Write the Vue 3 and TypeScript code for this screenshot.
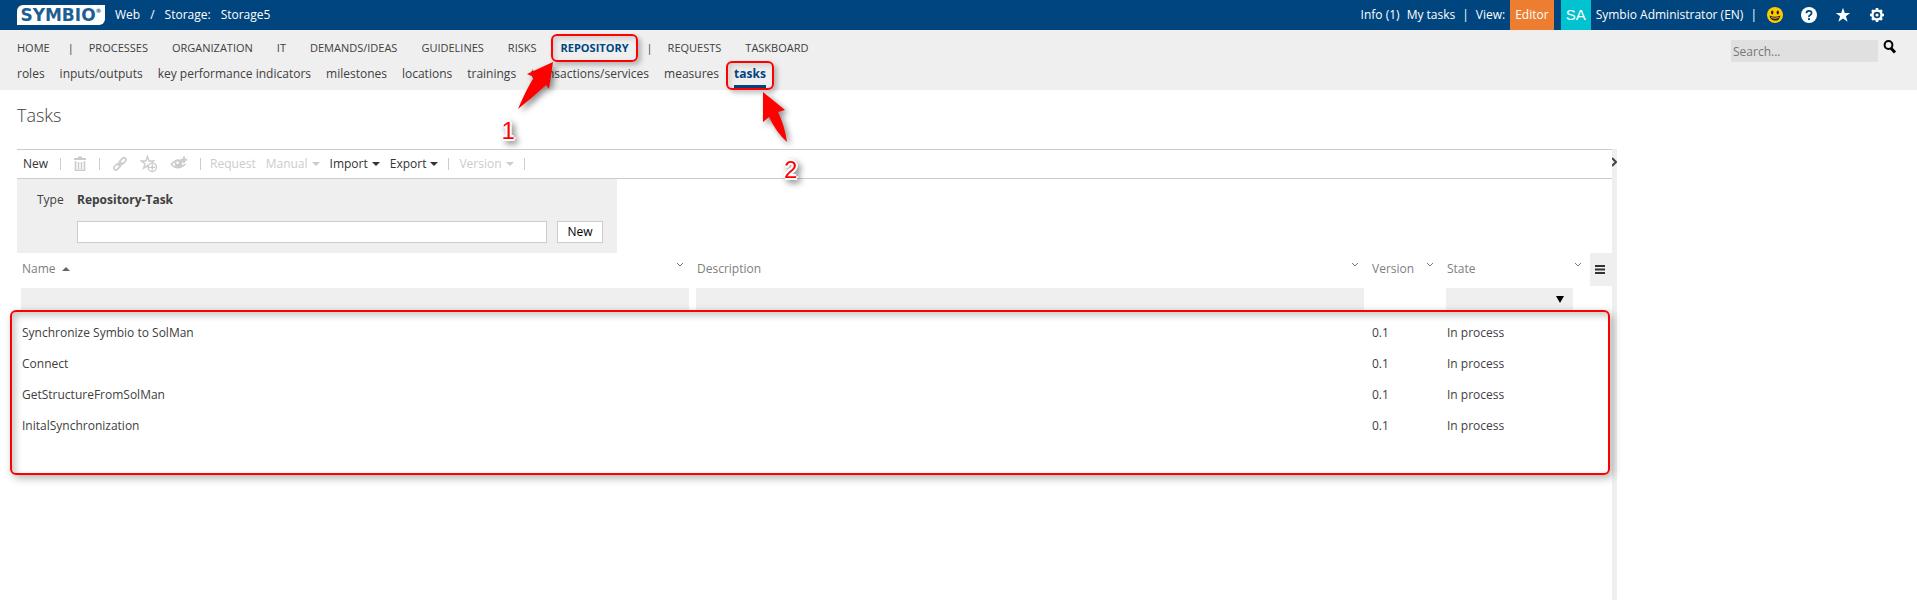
<script setup lang="ts">
import { ref } from 'vue'

interface Tab { label: string; active?: boolean; divider?: boolean }
interface Task { name: string; description: string; version: string; state: string }

const mainTabs: Tab[] = [
  { label: 'HOME' },
  { label: '|', divider: true },
  { label: 'PROCESSES' },
  { label: 'ORGANIZATION' },
  { label: 'IT' },
  { label: 'DEMANDS/IDEAS' },
  { label: 'GUIDELINES' },
  { label: 'RISKS' },
  { label: 'REPOSITORY', active: true },
  { label: '|', divider: true },
  { label: 'REQUESTS' },
  { label: 'TASKBOARD' },
]

const subTabs: Tab[] = [
  { label: 'roles' },
  { label: 'inputs/outputs' },
  { label: 'key performance indicators' },
  { label: 'milestones' },
  { label: 'locations' },
  { label: 'trainings' },
  { label: 'transactions/services' },
  { label: 'measures' },
  { label: 'tasks', active: true },
]

const tasks: Task[] = [
  { name: 'Synchronize Symbio to SolMan', description: '', version: '0.1', state: 'In process' },
  { name: 'Connect', description: '', version: '0.1', state: 'In process' },
  { name: 'GetStructureFromSolMan', description: '', version: '0.1', state: 'In process' },
  { name: 'InitalSynchronization', description: '', version: '0.1', state: 'In process' },
]

const search = ref('')
const newName = ref('')
const nameFilter = ref('')
const descriptionFilter = ref('')
const stateFilter = ref('')
</script>

<template>
  <div class="page">
    <header class="topbar">
      <a href="#" class="logo">SYMBIO<sup>®</sup></a>
      <nav class="crumbs" aria-label="Breadcrumb">
        <a href="#">Web</a><span>/</span><a href="#">Storage:</a><a href="#">Storage5</a>
      </nav>
      <div class="account">
        <a href="#">Info (1)</a>
        <a href="#">My tasks</a>
        <span>|</span>
        <span class="view">View: <button type="button" class="editor">Editor</button></span>
        <a href="#" class="user"><span class="avatar">SA</span>Symbio Administrator (EN)</a>
        <span>|</span>
      </div>
      <div class="top-icons">
        <button type="button" aria-label="Feedback">
          <svg width="16" height="16" viewBox="0 0 16 16"><circle cx="8" cy="8" r="8" fill="#fc0" /><ellipse cx="5.2" cy="5.5" rx="1.2" ry="1.9" fill="#222" /><ellipse cx="10.8" cy="5.5" rx="1.2" ry="1.9" fill="#222" /><path d="M2.5 8.6Q8 11 13.5 8.6Q12.6 13.6 8 13.6T2.5 8.6Z" fill="#222" /><path d="M4 10Q8 11.6 12 10L11.5 11Q8 12.3 4.5 11Z" fill="#fc0" /></svg>
        </button>
        <button type="button" aria-label="Help">
          <svg width="16" height="16" viewBox="0 0 16 16"><circle cx="8" cy="8" r="8" fill="#fff" /><path d="M5.4 6.2Q5.5 3.8 8 3.8T10.6 6Q10.6 7.2 9.2 8T8 10" fill="none" stroke="#00457e" stroke-width="1.8" /><circle cx="8" cy="12.2" r="1.1" fill="#00457e" /></svg>
        </button>
        <button type="button" aria-label="Favorites">
          <svg width="16" height="16" viewBox="0 0 16 16"><path d="M8 .8L9.8 6H15.2L10.9 9.2L12.6 14.8L8 11.4L3.4 14.8L5.1 9.2L.8 6H6.2Z" fill="#fff" /></svg>
        </button>
        <button type="button" aria-label="Settings">
          <svg width="16" height="16" viewBox="0 0 16 16"><circle cx="8" cy="8" r="5.8" fill="#fff" /><g stroke="#fff" stroke-width="2.6"><path d="M8 1V15M1 8H15M3.05 3.05L12.95 12.95M12.95 3.05L3.05 12.95" /></g><circle cx="8" cy="8" r="3.3" fill="#00457e" /><circle cx="8" cy="8" r="1.6" fill="#fff" /></svg>
        </button>
      </div>
    </header>

    <div class="navbar">
      <div class="tabs">
        <nav class="main-tabs" aria-label="Areas">
          <template v-for="(tab, i) in mainTabs" :key="i">
            <span v-if="tab.divider" class="divider">|</span>
            <a v-else href="#" :class="{ active: tab.active }">{{ tab.label }}<span v-if="tab.active" class="callout first">
              <svg width="60" height="60" viewBox="0 0 60 60"><path d="M39 4L35 31L32 27Q18 40 4 51Q12 32 20 19L13 16Z" fill="#f00" /></svg>
              <b>1</b>
            </span></a>
          </template>
        </nav>
        <nav class="sub-tabs" aria-label="Repository">
          <a v-for="tab in subTabs" :key="tab.label" href="#" :class="{ active: tab.active }">{{ tab.label }}<span v-if="tab.active" class="callout second">
            <svg width="40" height="60" viewBox="0 0 40 60"><path d="M5 3L27 21L20 23Q27 38 29 53Q18 43 11 28L5 33Z" fill="#f00" /></svg>
            <b>2</b>
          </span></a>
        </nav>
      </div>
      <form class="search" @submit.prevent>
        <input v-model="search" type="text" placeholder="Search..." aria-label="Search">
        <button type="submit" aria-label="Start search">
          <svg width="14" height="15" viewBox="0 0 14 15"><circle cx="5.5" cy="5" r="3.9" fill="none" stroke="#000" stroke-width="2" /><path d="M8 8.2L12 12.6" stroke="#000" stroke-width="3" /></svg>
        </button>
      </form>
    </div>

    <h1>Tasks</h1>

    <div class="body">
      <main>
        <div class="toolbar">
          <div class="tools">
            <button type="button">New</button>
            <i class="sep" />
            <button type="button" disabled aria-label="Delete">
              <svg width="14" height="16" viewBox="0 0 14 16"><path d="M5 .5H9V2H13V4H1V2H5Z" fill="#ccc" /><path d="M2.5 5V14.2H11.5V5M5.5 6V13M8.5 6V13" fill="none" stroke="#ccc" stroke-width="1.6" /></svg>
            </button>
            <i class="sep" />
            <button type="button" disabled aria-label="Link">
              <svg width="16" height="16" viewBox="0 0 16 16" fill="none" stroke="#ccc" stroke-width="1.7"><rect x="-3.6" y="-2" width="7.2" height="4" rx="2" transform="translate(10.8 5) rotate(-45)" /><rect x="-3.6" y="-2" width="7.2" height="4" rx="2" transform="translate(5 10.8) rotate(-45)" /><path d="M6 9.8L9.8 6" /></svg>
            </button>
            <button type="button" disabled aria-label="Add favorite">
              <svg width="18" height="18" viewBox="0 0 18 18" fill="none" stroke="#ccc" stroke-width="1.3"><path d="M8.5 13L7.5 10.6L3.5 13.4L5 8.7L1.2 6H6L7.5 1.3L9 6H13.8L11.8 7.6" /><circle cx="12.3" cy="12.3" r="4.2" /><path d="M12.3 9.3V15.3M9.3 12.3H15.3" /></svg>
            </button>
            <button type="button" disabled aria-label="Watch">
              <svg width="18" height="16" viewBox="0 0 18 16"><path d="M1 8.5Q7 1.5 13 5.5M1 8.5Q8 15 15.5 8" fill="none" stroke="#ccc" stroke-width="1.7" /><circle cx="8.5" cy="7.8" r="3.8" fill="#ccc" /><circle cx="7.5" cy="6.8" r="1.3" fill="#fff" /><path d="M14 .5V7M10.8 3.7H17.2" stroke="#ccc" stroke-width="2" /></svg>
            </button>
            <i class="sep" />
          </div>
          <div class="tools actions">
            <button type="button" disabled>Request</button>
            <button type="button" disabled>Manual<i class="caret" /></button>
            <button type="button">Import<i class="caret" /></button>
            <button type="button">Export<i class="caret" /></button>
            <i class="sep" />
            <button type="button" disabled>Version<i class="caret" /></button>
            <i class="sep" />
          </div>
        </div>

        <form class="create" @submit.prevent>
          <label for="task-name">Type</label>
          <strong>Repository-Task</strong>
          <input id="task-name" v-model="newName" type="text">
          <button type="submit">New</button>
        </form>

        <div class="grid">
          <table>
            <colgroup><col><col><col class="c-version"><col class="c-state"><col class="c-menu"></colgroup>
            <thead>
              <tr>
                <th><div>Name<i class="sort" /><svg class="chev" width="8" height="6" viewBox="0 0 8 6"><path d="M1 1L4 4L7 1" /></svg></div></th>
                <th><div>Description<svg class="chev" width="8" height="6" viewBox="0 0 8 6"><path d="M1 1L4 4L7 1" /></svg></div></th>
                <th><div>Version<svg class="chev" width="8" height="6" viewBox="0 0 8 6"><path d="M1 1L4 4L7 1" /></svg></div></th>
                <th><div>State<svg class="chev" width="8" height="6" viewBox="0 0 8 6"><path d="M1 1L4 4L7 1" /></svg></div></th>
                <th class="menu">
                  <button type="button" aria-label="Columns"><svg width="10" height="9" viewBox="0 0 10 9"><path d="M0 1H10M0 4.5H10M0 8H10" stroke="#333" stroke-width="2" /></svg></button>
                </th>
              </tr>
              <tr class="filters">
                <td><input v-model="nameFilter" type="text" aria-label="Filter name"></td>
                <td><input v-model="descriptionFilter" type="text" aria-label="Filter description"></td>
                <td />
                <td class="state-filter">
                  <select v-model="stateFilter" aria-label="Filter state"><option value="" /></select>
                  <svg width="8" height="7" viewBox="0 0 8 7"><path d="M0 0H8L4 7Z" fill="#000" /></svg>
                </td>
                <td />
              </tr>
            </thead>
            <tbody>
              <tr v-for="task in tasks" :key="task.name">
                <td>{{ task.name }}</td>
                <td>{{ task.description }}</td>
                <td>{{ task.version }}</td>
                <td>{{ task.state }}</td>
                <td />
              </tr>
            </tbody>
          </table>
          <div class="marker" />
        </div>
      </main>
      <div class="splitter">
        <button type="button" aria-label="Toggle details"><svg width="5" height="10" viewBox="0 0 5 10"><path d="M0 1L4 5L0 9" fill="none" stroke="#444" stroke-width="2" /></svg></button>
      </div>
      <aside />
    </div>
  </div>
</template>

<style>
body {
  background: #fff;
}
</style>

<style scoped>
.page {
  min-height: 100vh;
  display: flex;
  flex-direction: column;
  font: 12px/16px "Open Sans", "Noto Sans", sans-serif;
  color: #404040;
}

.page * {
  box-sizing: border-box;
}

a {
  color: inherit;
  text-decoration: none;
  white-space: nowrap;
}

button,
input,
select {
  font: inherit;
  color: inherit;
  margin: 0;
  padding: 0;
  border: 0;
  border-radius: 0;
  background: none;
}

svg {
  display: block;
}

.topbar {
  display: flex;
  align-items: center;
  height: 30px;
  padding: 0 32px 0 17px;
  background: #00457e;
  color: #fff;
}

.logo {
  display: flex;
  justify-content: center;
  width: 88px;
  height: 20px;
  margin-right: 10px;
  border-radius: 6px 0 6px 0;
  background: #fff;
  color: #1d5f94;
  font: bold 17px/20px "DejaVu Sans", sans-serif;
}

.logo sup {
  font-size: 6px;
  line-height: 12px;
}

.crumbs {
  display: flex;
  gap: 10px;
}

.account {
  display: flex;
  align-items: center;
  gap: 7px;
  margin-left: auto;
}

.view {
  display: flex;
  align-items: center;
  gap: 5px;
}

.editor {
  height: 30px;
  padding: 0 5px;
  background: #ed7d31;
}

.user {
  display: flex;
  align-items: center;
  gap: 5px;
}

.avatar {
  padding: 0 5px;
  background: #00c3cf;
  font: 15px/30px "Liberation Sans", Arial, sans-serif;
}

.top-icons {
  display: flex;
  gap: 18px;
  margin-left: 10px;
}

.navbar {
  display: flex;
  justify-content: space-between;
  height: 60px;
  padding: 10px 20px 0 17px;
  background: #efefef;
}

.main-tabs,
.sub-tabs {
  display: flex;
}

.main-tabs {
  gap: 24px;
  font-size: 11px;
}

.main-tabs .divider {
  margin: 0 -9px 0 -6px;
}

.sub-tabs {
  gap: 15px;
  margin-top: 6px;
}

.main-tabs a {
  height: 20px;
}

.sub-tabs a {
  height: 22px;
}

.tabs .active {
  position: relative;
  color: #00457e;
  font-weight: bold;
}

.sub-tabs .active {
  border-bottom: 3px solid #00457e;
}

.callout {
  position: absolute;
  z-index: 2;
  border: 2px solid #f00;
  border-radius: 6px;
  box-shadow: 3px 3px 5px rgba(0, 0, 0, .25), inset 3px 3px 5px rgba(0, 0, 0, .12);
}

.callout.first {
  inset: -6px -9px -2px -10px;
}

.callout.second {
  inset: -5px -8px -5px -8px;
}

.callout svg,
.callout b {
  position: absolute;
  filter: drop-shadow(3px 3px 3px rgba(0, 0, 0, .45));
}

.callout b {
  color: #f00;
  font: 24px/28px "Liberation Sans", Arial, sans-serif;
  text-shadow: 2px 0 #fff, -2px 0 #fff, 0 2px #fff, 0 -2px #fff, 1px 2px #fff, -1px -2px #fff;
}

.first svg {
  left: -39px;
  top: 22px;
}

.first b {
  left: -51px;
  top: 81px;
}

.second svg {
  left: 30px;
  top: 26px;
}

.second b {
  left: 56px;
  top: 93px;
}

.search {
  display: flex;
  align-items: flex-start;
  gap: 5px;
}

.search input {
  width: 147px;
  height: 22px;
  padding: 0 2px;
  background: #e0e0e0;
}

.search input::placeholder {
  color: #777;
}

h1 {
  margin: 13px 17px 22px;
  font-size: 18px;
  line-height: 24px;
  font-weight: 300;
}

.body {
  flex: 1;
  display: flex;
}

main {
  flex: 1;
  margin-left: 17px;
}

aside {
  width: 300px;
}

.splitter {
  width: 5px;
  background: #efefef;
}

.splitter button {
  margin-top: 8px;
}

.toolbar,
.tools {
  display: flex;
  align-items: center;
}

.toolbar {
  height: 30px;
  padding: 0 6px;
  border: solid #ccc;
  border-width: 1px 0;
}

.tools {
  gap: 12px;
}

.actions {
  gap: 10px;
  margin-left: 9px;
}

.toolbar button {
  display: flex;
  align-items: center;
  color: #333;
}

.toolbar button:disabled {
  color: #ccc;
}

.sep {
  width: 1px;
  height: 12px;
  background: #ccc;
}

.caret {
  margin-left: 4px;
  border: 4px solid transparent;
  border-top-color: currentColor;
  border-bottom: 0;
}

.create {
  display: grid;
  grid-template-columns: 40px 470px 46px;
  column-gap: 10px;
  row-gap: 13px;
  justify-content: start;
  width: 600px;
  height: 74px;
  padding: 13px 10px 10px;
  background: #efefef;
}

.create label {
  padding-left: 10px;
}

.create input {
  grid-column: 2;
  height: 22px;
  border: 1px solid #ccc;
  background: #fff;
}

.create button {
  height: 22px;
  border: 1px solid #ccc;
  background: #fff;
  color: #000;
}

.grid {
  position: relative;
}

.marker {
  position: absolute;
  inset: 57px 2px -34px -7px;
  border: 2px solid #f00;
  border-radius: 6px;
  box-shadow: 3px 3px 8px rgba(0, 0, 0, .3), inset 4px 4px 6px rgba(0, 0, 0, .2);
  pointer-events: none;
}

table {
  width: 100%;
  table-layout: fixed;
  border-collapse: collapse;
}

.c-version {
  width: 75px;
}

.c-state {
  width: 148px;
}

.c-menu {
  width: 22px;
}

th {
  height: 33px;
  padding: 0 8px 2px 5px;
  color: #808080;
  font-weight: normal;
  text-align: left;
}

th div {
  display: flex;
  align-items: center;
}

.sort {
  margin-left: 6px;
  border: 4px solid transparent;
  border-bottom-color: #666;
  border-top: 0;
}

.chev {
  margin: 0 0 8px auto;
  fill: none;
  stroke: #777;
}

.menu {
  padding: 0;
  background: #efefef;
}

.menu button {
  display: block;
  padding: 5px;
}

td {
  height: 31px;
  padding: 0 3px 0 5px;
}

.filters td {
  position: relative;
  vertical-align: top;
  padding: 2px 3px 0 4px;
}

.filters input,
.filters select {
  display: block;
  width: 100%;
  height: 24px;
  background: #efefef;
}

.filters select {
  appearance: none;
}

.filters .state-filter {
  padding-right: 17px;
}

.state-filter svg {
  position: absolute;
  right: 26px;
  top: 10px;
  pointer-events: none;
}
</style>
